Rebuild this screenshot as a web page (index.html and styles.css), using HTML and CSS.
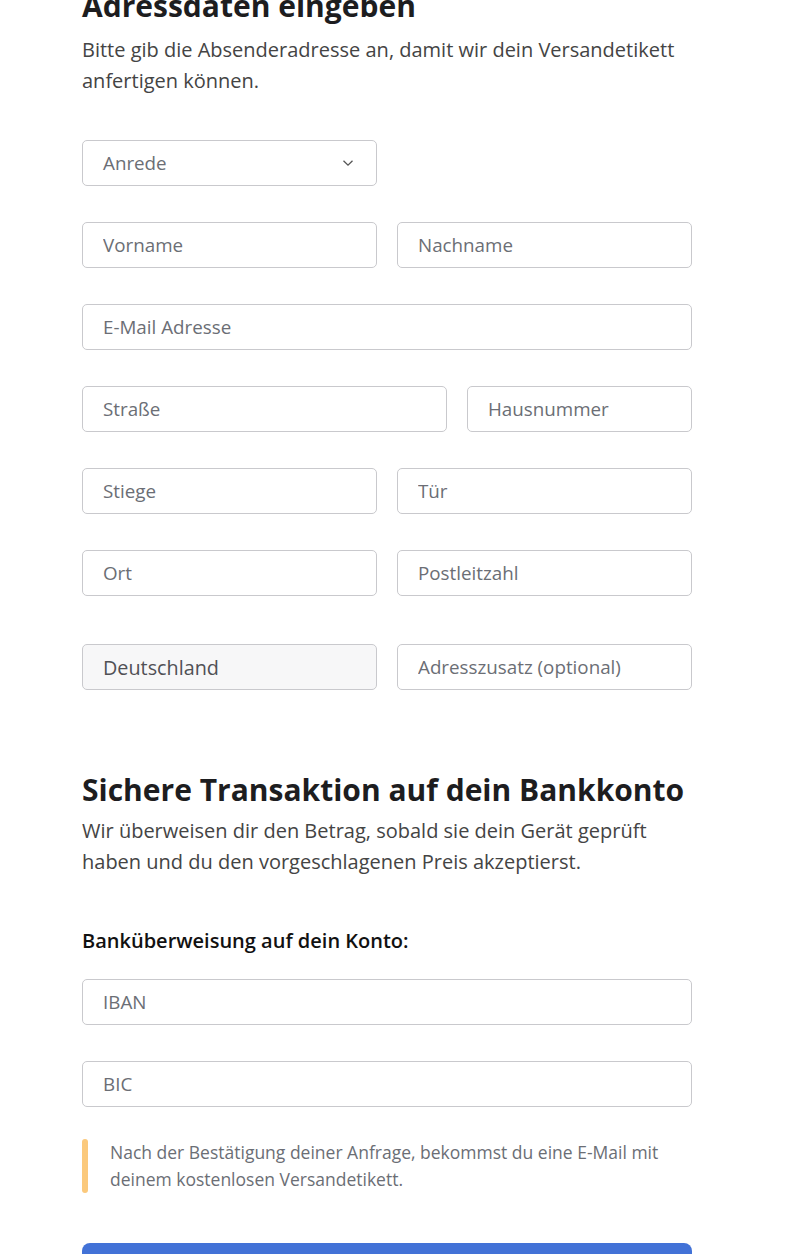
FILE: index.html
```html
<!DOCTYPE html>
<html lang="de">
<head>
  <meta charset="UTF-8">
  <meta name="viewport" content="width=device-width, initial-scale=1.0">
  <title>Adressdaten eingeben</title>
  <link rel="stylesheet" href="styles.css">
</head>
<body>
  <main class="page">
    <section class="block address">
      <h2 class="title first">Adressdaten eingeben</h2>
      <p class="lead">Bitte gib die Absenderadresse an, damit wir dein Versandetikett anfertigen können.</p>

      <div class="fields">
        <div class="row half">
          <div class="select">
            <span>Anrede</span>
            <svg width="12" height="8" viewBox="0 0 12 8"><path d="M1.5 1.8 6 6.2l4.5-4.4" fill="none" stroke="#555" stroke-width="1.3"/></svg>
          </div>
        </div>
        <div class="row half">
          <input class="field" type="text" placeholder="Vorname">
          <input class="field" type="text" placeholder="Nachname">
        </div>
        <div class="row">
          <input class="field" type="email" placeholder="E-Mail Adresse">
        </div>
        <div class="row street">
          <input class="field" type="text" placeholder="Straße">
          <input class="field" type="text" placeholder="Hausnummer">
        </div>
        <div class="row half">
          <input class="field" type="text" placeholder="Stiege">
          <input class="field" type="text" placeholder="Tür">
        </div>
        <div class="row half">
          <input class="field" type="text" placeholder="Ort">
          <input class="field" type="text" placeholder="Postleitzahl">
        </div>
        <div class="row half country">
          <input class="field locked" type="text" value="Deutschland" readonly>
          <input class="field" type="text" placeholder="Adresszusatz (optional)">
        </div>
      </div>
    </section>

    <section class="block bank">
      <h2 class="title">Sichere Transaktion auf dein Bankkonto</h2>
      <p class="lead">Wir überweisen dir den Betrag, sobald sie dein Gerät geprüft haben und du den vorgeschlagenen Preis akzeptierst.</p>

      <label class="bank-label" for="iban">Banküberweisung auf dein Konto:</label>
      <div class="fields">
        <input class="field" id="iban" type="text" placeholder="IBAN">
        <input class="field" id="bic" type="text" placeholder="BIC">
      </div>

      <div class="notice">Nach der Bestätigung deiner Anfrage, bekommst du eine E-Mail mit deinem kostenlosen Versandetikett.</div>

      <button class="submit" type="submit" aria-label="Anfrage absenden"></button>
    </section>
  </main>
</body>
</html>
```

FILE: styles.css
```css
body {
  margin: 0;
  background: #fff;
  font-family: "Open Sans", "Noto Sans", sans-serif;
  color: #222;
}
.page {
  width: 610px;
  margin-left: 82px;
}
.title {
  margin: 0;
  font-size: 30px;
  font-weight: 700;
  line-height: 36px;
  color: #1d1d1f;
}
.title.first {
  margin-top: -12px;
}
.lead {
  margin: 10px 0 0;
  font-size: 20px;
  line-height: 31px;
  color: #444;
}
.bank .lead {
  margin-top: 7px;
}
.address .fields {
  margin-top: 44px;
}
.fields {
  display: flex;
  flex-direction: column;
  gap: 36px;
}
.row {
  display: grid;
  grid-template-columns: 1fr;
  gap: 20px;
}
.row.half {
  grid-template-columns: 1fr 1fr;
}
.row.street {
  grid-template-columns: 365px 1fr;
}
.row.country {
  margin-top: 12px;
}
.field, .select {
  box-sizing: border-box;
  height: 46px;
  width: 100%;
  padding: 0 20px;
  border: 1px solid #c9c9cd;
  border-radius: 5px;
  background: #fff;
  font-family: inherit;
  font-size: 18.8px;
  color: #555;
  outline: none;
}
.field::placeholder {
  color: #6b6e75;
}
.select {
  display: flex;
  align-items: center;
  justify-content: space-between;
  color: #6b6e75;
  padding-right: 22px;
}
.field.locked {
  background: #f7f7f8;
  color: #505055;
  font-size: 19.8px;
}
.bank {
  margin-top: 82px;
}
.bank-label {
  display: block;
  margin-top: 51px;
  font-size: 20px;
  font-weight: 600;
  color: #111;
  line-height: 26px;
}
.bank .fields {
  margin-top: 25px;
}
.notice {
  position: relative;
  margin-top: 32px;
  padding-left: 28px;
  font-size: 17.5px;
  line-height: 27px;
  color: #6b6e75;
}
.notice::before {
  content: "";
  position: absolute;
  left: 0;
  top: 0;
  width: 6px;
  height: 100%;
  border-radius: 3px;
  background: #fbc97c;
}
.submit {
  display: block;
  width: 100%;
  height: 56px;
  margin-top: 50px;
  border: none;
  border-radius: 8px;
  background: #4272d7;
  cursor: pointer;
}
```
